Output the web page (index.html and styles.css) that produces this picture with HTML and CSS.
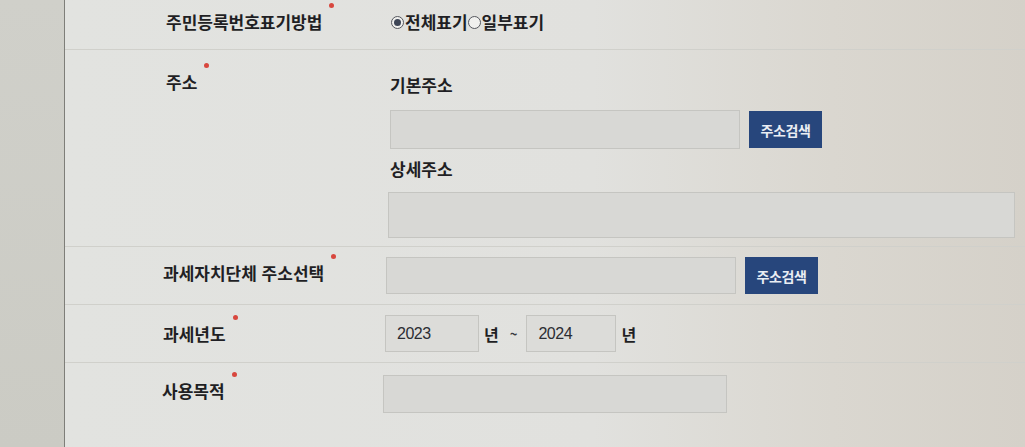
FILE: index.html
```html
<!DOCTYPE html>
<html lang="ko">
<head>
<meta charset="utf-8">
<title>신청서</title>
<link rel="stylesheet" href="styles.css">
</head>
<body>
<div class="page">
  <aside class="sidebar"></aside>
  <main class="form">
    <div class="row row-1">
      <div class="label"><span class="req">주민등록번호표기방법</span></div>
      <div class="value radios">
        <span class="radio checked"></span><span class="radio-text">전체표기</span>
        <span class="radio"></span><span class="radio-text">일부표기</span>
      </div>
    </div>

    <div class="row row-2">
      <div class="label"><span class="req">주소</span></div>
      <div class="value stack">
        <div class="sub">기본주소</div>
        <div class="line line-basic">
          <div class="input w-350 h-39"></div>
          <button class="btn">주소검색</button>
        </div>
        <div class="sub sub-2">상세주소</div>
        <div class="input w-626 h-46 detail"></div>
      </div>
    </div>

    <div class="row row-3">
      <div class="label"><span class="req">과세자치단체 주소선택</span></div>
      <div class="value line">
        <div class="input w-350 h-37"></div>
        <button class="btn">주소검색</button>
      </div>
    </div>

    <div class="row row-4">
      <div class="label"><span class="req">과세년도</span></div>
      <div class="value line">
        <div class="input year y1">2023</div>
        <span class="unit">년</span>
        <span class="tilde">~</span>
        <div class="input year y2">2024</div>
        <span class="unit">년</span>
      </div>
    </div>

    <div class="row row-5">
      <div class="label"><span class="req">사용목적</span></div>
      <div class="value line">
        <div class="input w-344 h-38"></div>
      </div>
    </div>
  </main>
</div>
</body>
</html>
```

FILE: styles.css
```css
html, body {
  margin: 0;
  padding: 0;
  height: 100%;
}

body {
  font-family: "Noto Sans CJK KR", "Noto Sans", sans-serif;
  color: #1f1f24;
  background: #e0e0dc;
  overflow: hidden;
}

.page {
  display: grid;
  grid-template-columns: 65px 1fr;
  height: 447px;
}

.sidebar {
  background: linear-gradient(180deg, #d0d0ca 0%, #cbcbc4 100%);
  border-right: 1px solid #7e7e79;
}

.form {
  background: linear-gradient(90deg, #e2e3e0 0%, #e1e1de 55%, #dad7d0 80%, #d5d1c9 100%);
  display: flex;
  flex-direction: column;
}

.row {
  display: grid;
  grid-template-columns: 222px 1fr;
  padding-left: 101px;
  border-bottom: 1px solid #d0d0cb;
  box-sizing: border-box;
}

.label {
  font-size: 17px;
  font-weight: 700;
  line-height: 24px;
  letter-spacing: 0;
}

.req {
  position: relative;
  display: inline-block;
}

.req::after {
  content: "";
  position: absolute;
  left: calc(100% + 7px);
  top: -7px;
  width: 5px;
  height: 5px;
  border-radius: 50%;
  background: #d8473e;
}

/* row 1 */
.row-1 {
  height: 50px;
  padding-top: 10px;
}

.radios {
  display: flex;
  align-items: center;
  height: 24px;
  margin-left: 3px;
  font-size: 17px;
  font-weight: 700;
}

.radio {
  width: 11px;
  height: 11px;
  border: 1px solid #55575e;
  border-radius: 50%;
  box-sizing: content-box;
  display: inline-flex;
  align-items: center;
  justify-content: center;
  margin-right: 1px;
  background: #f0f0ee;
}

.radio.checked::before {
  content: "";
  width: 7px;
  height: 7px;
  border-radius: 50%;
  background: #3d4556;
}

.radio-text {
  line-height: 24px;
}

/* row 2 */
.row-2 {
  height: 197px;
  padding-top: 20px;
}

.row-2 .value {
  padding-top: 3px;
}

.stack {
  display: flex;
  flex-direction: column;
  align-items: flex-start;
}

.sub {
  font-size: 17px;
  font-weight: 700;
  line-height: 24px;
  margin-left: 2px;
}

.line-basic {
  margin-top: 13px;
  margin-left: 2px;
}

.sub-2 {
  margin-top: 8px;
}

.detail {
  margin-top: 11px;
}

.line {
  display: flex;
  align-items: center;
}

.input {
  background: #d8d8d5;
  border: 1px solid #c5c5c1;
  box-sizing: border-box;
}

.w-350 { width: 350px; }
.w-626 { width: 627px; }
.w-344 { width: 344px; }
.h-39 { height: 39px; }
.h-46 { height: 46px; }
.h-37 { height: 37px; }
.h-38 { height: 38px; }

.btn {
  margin-left: 9px;
  width: 73px;
  height: 37px;
  background: #27467c;
  color: #e9edf3;
  border: none;
  font-family: "Noto Sans CJK KR", sans-serif;
  font-size: 14px;
  font-weight: 700;
  letter-spacing: -0.4px;
  padding: 0;
}

/* row 3 */
.row-3 {
  height: 58px;
  align-items: center;
}

.row-3 .label {
  margin-top: -5px;
  margin-left: -3px;
}

.row-3 .value {
  margin-left: -2px;
}

/* row 4 */
.row-4 {
  height: 58px;
  align-items: center;
}

.row-4 .label {
  margin-left: -3px;
}

.row-4 .value {
  margin-left: -3px;
}

.year {
  height: 37px;
  display: flex;
  align-items: center;
  padding-left: 11px;
  font-family: "Liberation Sans", Arial, sans-serif;
  font-size: 16px;
  letter-spacing: -0.5px;
  color: #2b2d33;
  background: #dcdcd9;
}

.y1 { width: 94px; }
.y2 { width: 90px; }

.unit {
  font-size: 16px;
  font-weight: 700;
  margin-left: 5px;
  line-height: 24px;
}

.tilde {
  font-size: 13px;
  font-weight: 700;
  margin: 0 9px 0 11px;
  color: #3a3a40;
}

/* row 5 */
.row-5 {
  flex: 1;
  border-bottom: none;
  padding-top: 12px;
  align-items: start;
}

.row-5 .label {
  margin-top: 4px;
  margin-left: -4px;
}

.row-5 .value {
  margin-left: -5px;
}
```
